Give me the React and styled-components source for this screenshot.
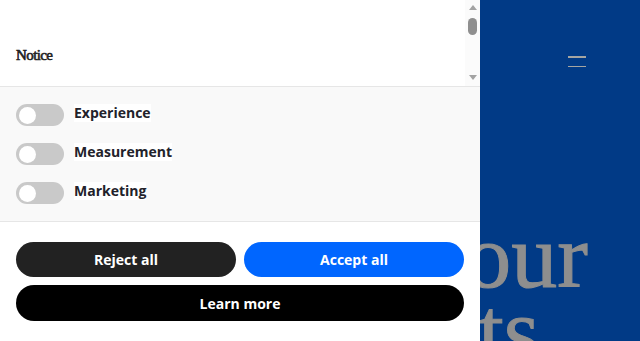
import React from "react";
import styled, { createGlobalStyle } from "styled-components";

const GlobalStyle = createGlobalStyle`
  html, body {
    margin: 0;
    padding: 0;
    height: 100%;
    overflow: hidden;
  }
  body {
    background: #013a86;
    font-family: "Open Sans", "Liberation Sans", sans-serif;
  }
  * {
    box-sizing: border-box;
  }
`;

const Page = styled.main`
  height: 341px;
  background: #013a86;
  display: flex;
  flex-direction: column;
  overflow: hidden;
`;

const TopBar = styled.header`
  display: flex;
  justify-content: flex-end;
  padding: 56px 54px 0 0;
`;

const Burger = styled.button`
  width: 18px;
  height: 11px;
  padding: 0;
  border: 0;
  background: transparent;
  display: flex;
  flex-direction: column;
  justify-content: space-between;
  span {
    display: block;
    height: 1.5px;
    background: #a5a5a2;
  }
`;

const Heading = styled.h1`
  margin: 152px 0 0 100px;
  font-family: "Liberation Serif", serif;
  font-weight: 400;
  font-size: 92px;
  line-height: 74px;
  color: #8e8e8e;
  -webkit-text-stroke: 1px #8e8e8e;
  white-space: nowrap;
`;

const Panel = styled.aside`
  position: fixed;
  top: 0;
  left: 0;
  bottom: 0;
  width: 480px;
  background: #fff;
  display: flex;
  flex-direction: column;
`;

const Intro = styled.section`
  height: 87px;
  flex: none;
  display: flex;
  border-bottom: 1px solid #e6e6e6;
`;

const IntroContent = styled.div`
  flex: 1;
  padding: 45px 16px 0;
  overflow: hidden;
`;

const ScrollTrack = styled.div`
  width: 15px;
  flex: none;
  background: #fbfbfb;
  display: flex;
  flex-direction: column;
  align-items: center;
  padding: 5px 0 6px;
`;

const Thumb = styled.div`
  width: 9px;
  height: 17px;
  margin-top: 8px;
  border-radius: 5px;
  background: #8f8f8f;
`;

const Gap = styled.div`
  flex: 1;
`;

const Arrow = ({ down }) => (
  <svg width="8" height="5" viewBox="0 0 8 5">
    <path
      d={down ? "M0 0 H8 L4 5 Z" : "M0 5 H8 L4 0 Z"}
      fill="#a3a3a3"
    />
  </svg>
);

const Title = styled.h2`
  margin: 0;
  font-family: "Liberation Serif", serif;
  font-weight: 400;
  font-size: 15px;
  line-height: 20px;
  letter-spacing: -0.6px;
  color: #222;
  -webkit-text-stroke: 0.6px #222;
`;

const Options = styled.section`
  background: #f9f9f9;
  padding: 17px 16px 17px;
  display: flex;
  flex-direction: column;
  gap: 17px;
  border-bottom: 1px solid #e6e6e6;
`;

const Option = styled.label`
  display: flex;
  align-items: center;
  gap: 10px;
  height: 22px;
`;

const Switch = styled.span`
  position: relative;
  width: 48px;
  height: 22px;
  border-radius: 11px;
  background: ${(p) => (p.$on ? "#0066ff" : "#c9c9c9")};
  flex: none;
  &::after {
    content: "";
    position: absolute;
    top: 2.5px;
    left: ${(p) => (p.$on ? "29px" : "3px")};
    width: 17px;
    height: 17px;
    border-radius: 50%;
    background: #fff;
  }
`;

const OptionName = styled.span`
  font-size: 14px;
  font-weight: 700;
  color: #22222a;
  background: #fff;
  line-height: 18px;
  margin-top: -4px;
`;

const Actions = styled.section`
  padding: 20px 16px;
  display: grid;
  grid-template-columns: 1fr 1fr;
  gap: 8px;
`;

const Button = styled.button`
  grid-column: ${(p) => (p.$wide ? "1 / -1" : "auto")};
  height: ${(p) => (p.$wide ? "36px" : "35px")};
  border: 0;
  border-radius: 18px;
  background: ${(p) => p.$bg};
  color: #fff;
  font-family: "Open Sans", "Liberation Sans", sans-serif;
  font-size: 14px;
  font-weight: 700;
  cursor: pointer;
`;

const options = ["Experience", "Measurement", "Marketing"];

export default function App() {
  return (
    <>
      <GlobalStyle />
      <Page>
        <TopBar>
          <Burger aria-label="Menu">
            <span />
            <span />
          </Burger>
        </TopBar>
        <Heading>
          Manage your
          <br />
          investments
        </Heading>
      </Page>
      <Panel>
        <Intro>
          <IntroContent>
            <Title>Notice</Title>
          </IntroContent>
          <ScrollTrack aria-hidden="true">
            <Arrow />
            <Thumb />
            <Gap />
            <Arrow down />
          </ScrollTrack>
        </Intro>
        <Options>
          {options.map((name) => (
            <Option key={name}>
              <Switch />
              <OptionName>{name}</OptionName>
            </Option>
          ))}
        </Options>
        <Actions>
          <Button $bg="#222222">Reject all</Button>
          <Button $bg="#0066ff">Accept all</Button>
          <Button $bg="#000000" $wide>
            Learn more
          </Button>
        </Actions>
      </Panel>
    </>
  );
}
